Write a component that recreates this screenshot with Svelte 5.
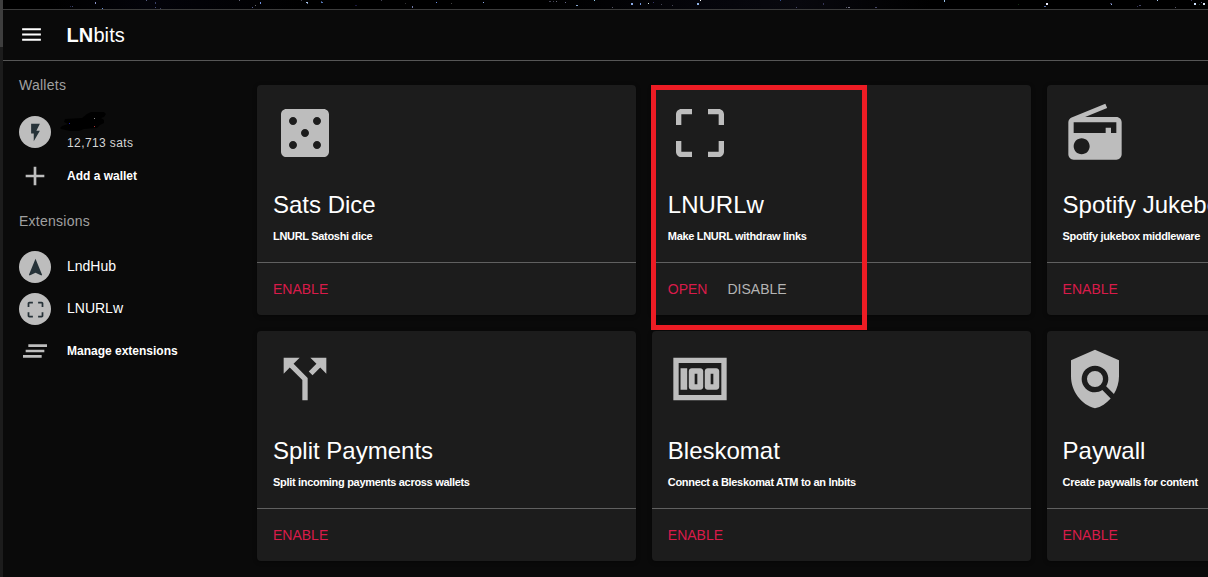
<script>
  const paths = {
    menu: 'M3 18h18v-2H3v2zm0-5h18v-2H3v2zm0-7v2h18V6H3z',
    dice: 'M19 3H5c-1.1 0-2 .9-2 2v14c0 1.1.9 2 2 2h14c1.1 0 2-.9 2-2V5c0-1.1-.9-2-2-2zM7.5 18c-.83 0-1.5-.67-1.5-1.5S6.67 15 7.5 15s1.5.67 1.5 1.5S8.33 18 7.5 18zm0-9C6.67 9 6 8.33 6 7.5S6.67 6 7.5 6 9 6.67 9 7.5 8.33 9 7.5 9zm4.5 4.5c-.83 0-1.5-.67-1.5-1.5s.67-1.5 1.5-1.5 1.5.67 1.5 1.5-.67 1.5-1.5 1.5zm4.5 4.5c-.83 0-1.5-.67-1.5-1.5s.67-1.5 1.5-1.5 1.5.67 1.5 1.5-.67 1.5-1.5 1.5zm0-9c-.83 0-1.5-.67-1.5-1.5S15.67 6 16.5 6s1.5.67 1.5 1.5S17.33 9 16.5 9z',
    crop: 'M3 5v4h2V5h4V3H5c-1.1 0-2 .9-2 2zm2 10H3v4c0 1.1.9 2 2 2h4v-2H5v-4zm14 4h-4v2h4c1.1 0 2-.9 2-2v-4h-2v4zm0-16h-4v2h4v4h2V5c0-1.1-.9-2-2-2z',
    radio: 'M3.24 6.15C2.51 6.43 2 7.17 2 8v12c0 1.1.89 2 2 2h16c1.11 0 2-.9 2-2V8c0-1.11-.89-2-2-2H8.3l8.26-3.34L15.88 1 3.24 6.15zM7 20c-1.66 0-3-1.34-3-3s1.34-3 3-3 3 1.34 3 3-1.34 3-3 3zm13-8h-2v-2h-2v2H4V8h16v4z',
    split: 'M14 4l2.29 2.29-2.88 2.88 1.42 1.42 2.88-2.88L20 10V4zm-4 0H4v6l2.29-2.29 4.71 4.7V20h2v-8.41l-5.29-5.3z',
    money: 'M4.7 8h2.5v8H4.7zM12.1 8H8.900c-.6 0-1.1.45-1.1 1v6c0 .55.5 1 1.100 1h3.200c.6 0 1.100-.45 1.100-1V9c0-.55-.5-1-1.100-1zm-1.100 6h-1v-4h1v4zm7.100-6h-3.200c-.6 0-1.100.45-1.100 1v6c0 .55.5 1 1.100 1h3.200c.6 0 1.100-.45 1.100-1V9c0-.55-.5-1-1.100-1zm-1.100 6h-1v-4h1v4zM2 4v16h20V4H2zm2 14V6h16v12H4z',
    policy: 'M21 5l-9-4-9 4v6c0 5.55 3.84 10.74 9 12 2.3-.56 4.33-1.9 5.88-3.71l-3.12-3.12c-1.94 1.29-4.58 1.07-6.29-.64-1.95-1.95-1.95-5.12 0-7.07 1.95-1.95 5.12-1.95 7.07 0 1.71 1.71 1.92 4.35.64 6.29l2.9 2.9C20.29 15.69 21 13.38 21 11V5zM12 9a3 3 0 1 0 0 6 3 3 0 0 0 0-6z',
    flash: 'M7 2v11h3v9l7-12h-4l4-8z',
    nav: 'M12 2L4.5 20.29l.71.71L12 18l6.79 3 .71-.71z',
    add: 'M19 13h-6v6h-2v-6H5v-2h6V5h2v6h6v2z',
    list: 'M5 13h14v-2H5v2zm-2 4h14v-2H3v2zM7 7v2h14V7H7z'
  };

  const cards = [
    { icon: 'dice', title: 'Sats Dice', text: 'LNURL Satoshi dice' },
    { icon: 'crop', title: 'LNURLw', text: 'Make LNURL withdraw links', on: true },
    { icon: 'radio', title: 'Spotify Jukebox', text: 'Spotify jukebox middleware' },
    { icon: 'split', title: 'Split Payments', text: 'Split incoming payments across wallets' },
    { icon: 'money', title: 'Bleskomat', text: 'Connect a Bleskomat ATM to an lnbits' },
    { icon: 'policy', title: 'Paywall', text: 'Create paywalls for content' }
  ];

  // x, y, width, height, fill
  const stars = [
    [95, 2, 1, 2, '#8890c8'], [102, 8, 1, 1, '#6a90d8'], [72, 6, 1, 1, '#3c4470'], [70, 6, 1, 1, '#262c50'],
    [146, 0, 1, 1, '#555a80'], [155, 2, 1, 2, '#3a4068'], [155, 7, 1, 1, '#454c78'], [160, 8, 1, 1, '#3a3f60'],
    [239, 0, 1, 1, '#667'], [252, 7, 1, 1, '#555d90'], [255, 5, 1, 1, '#666'], [260, 2, 1, 2, '#7090e0'],
    [301, 0, 1, 1, '#445'], [306, 2, 2, 1, '#a8c4e8'], [307, 3, 1, 1, '#7088b0'], [321, 2, 2, 1, '#5578b8'],
    [321, 1, 1, 1, '#38507c'], [355, 5, 2, 1, '#1a1840'], [381, 0, 1, 1, '#445'], [405, 3, 1, 1, '#333'],
    [412, 6, 1, 2, '#7078a8'], [436, 2, 1, 1, '#6a90e8'], [451, 3, 1, 1, '#444'], [483, 2, 1, 1, '#88a8e8'],
    [549, 1, 2, 1, '#445'], [553, 1, 1, 1, '#445'], [556, 1, 1, 1, '#667'], [565, 2, 1, 1, '#668'],
    [576, 5, 2, 1, '#88a8d0'], [594, 0, 1, 1, '#90c8e8'], [612, 7, 1, 1, '#556'], [631, 3, 2, 2, '#8aaae8'],
    [640, 3, 1, 2, '#7094d8'], [648, 3, 1, 1, '#d8eee8'], [653, 2, 1, 1, '#336'], [661, 4, 1, 1, '#445'],
    [672, 5, 1, 1, '#445'], [697, 3, 2, 2, '#90b4e8'], [700, 0, 1, 1, '#fff'], [780, 0, 1, 1, '#345090'],
    [796, 7, 1, 1, '#446'], [823, 3, 1, 2, '#335'], [846, 7, 1, 1, '#556'], [848, 7, 2, 1, '#778'],
    [875, 7, 2, 1, '#446'], [944, 0, 1, 2, '#98c0e8'], [1018, 4, 1, 1, '#143014'], [1046, 3, 2, 2, '#eef'],
    [1044, 6, 2, 1, '#5068a0'], [1110, 3, 2, 1, '#446'], [1111, 4, 1, 1, '#9ab8f0'], [1139, 5, 2, 1, '#446'],
    [1137, 6, 1, 1, '#335'], [1157, 0, 1, 1, '#aac8ee'], [1175, 7, 1, 1, '#556'], [1191, 0, 1, 1, '#446'],
    [1194, 3, 2, 2, '#cfe4ff'], [1199, 4, 1, 1, '#244'], [1201, 2, 1, 1, '#668'], [1203, 3, 2, 2, '#dde8f8']
  ];
</script>

{#snippet icon(name, size)}
  <svg class="icon" width={size} height={size} viewBox="0 0 24 24" fill="currentColor"><path d={paths[name]} /></svg>
{/snippet}

<div class="page">
  <div class="edge"><div class="thumb"></div></div>
  <div class="main">
    <svg class="sky" width="1205" height="9" viewBox="3 0 1205 9" shape-rendering="crispEdges">
      {#each stars as [x, y, w, h, fill]}
        <rect {x} {y} width={w} height={h} {fill} />
      {/each}
    </svg>
    <header>
      {@render icon('menu', 25)}
      <div class="brand"><strong>LN</strong>bits</div>
    </header>
    <div class="body">
      <aside>
        <div class="label">Wallets</div>
        <div class="item wallet">
          <div class="avatar">{@render icon('flash', 21)}</div>
          <div class="balance">
            <svg class="scribble" width="48" height="21" viewBox="0 0 48 21">
              <path fill="#000" d="M0 17L2 15L8 13L4 11L5 8L22 7L27 3L31 1L44 1L46 3L44 6L41 7L44 9L44 12L40 14L37 17L24 18L19 20L10 20L1 18Z" />
              <path fill="#888" d="M34 7h1v1h-1z" />
              <path fill="#a33" d="M34 15h1v1h-1z" />
              <path fill="#22a" d="M9 12h1v1h-1z" />
            </svg>
            <span>12,713 sats</span>
          </div>
        </div>
        <div class="item add">
          <div class="side">{@render icon('add', 32)}</div>
          <span class="caption">Add a wallet</span>
        </div>
        <div class="label second">Extensions</div>
        <div class="item ext">
          <div class="avatar">{@render icon('nav', 21)}</div>
          <span class="name">LndHub</span>
        </div>
        <div class="item ext">
          <div class="avatar">{@render icon('crop', 21)}</div>
          <span class="name">LNURLw</span>
        </div>
        <div class="item ext">
          <div class="side">{@render icon('list', 32)}</div>
          <span class="caption">Manage extensions</span>
        </div>
      </aside>
      <main>
        {#each cards as card}
          <section class="card">
            <div class="info">
              {@render icon(card.icon, 64)}
              <h5>{card.title}</h5>
              <small>{card.text}</small>
            </div>
            <div class="actions">
              {#if card.on}
                <span class="red">OPEN</span><span class="grey">DISABLE</span>
                <div class="highlight"></div>
              {:else}
                <span class="red">ENABLE</span>
              {/if}
            </div>
          </section>
        {/each}
      </main>
    </div>
  </div>
</div>

<style>
  :global(body) { background: #0a0a0a; overflow: hidden; }
  .page { display: flex; width: 1208px; height: 577px; overflow: hidden; background: #0a0a0a; color: #fff; font: 14px/20px "Liberation Sans", Arial, sans-serif; }
  .page * { box-sizing: border-box; }
  .icon { display: block; flex: none; }
  .edge { width: 3px; flex: none; background: #1c1c1c; }
  .thumb { height: 47px; background: #3e3e3e; }
  .main { flex: none; width: 1205px; }
  .sky { display: block; background: linear-gradient(90deg, #000 0 4%, #03030a 12%, #000 25% 45%, #05050b 58%, #08080e 66%, #000 77%); }
  header { height: 52px; border-top: 1px solid #3c3c3c; border-bottom: 1px solid #565656; display: flex; align-items: center; padding: 0 0 1px 16px; }
  .brand { font-size: 20px; margin-left: 22.5px; line-height: 24px; letter-spacing: .1px; }
  .body { display: flex; }
  aside { width: 254px; flex: none; padding: 14px 0 0 16px; }
  .label { height: 20px; color: #a0a0a0; letter-spacing: .25px; }
  .second { margin-top: 14px; }
  .item { display: flex; align-items: center; gap: 16px; }
  .avatar, .side { width: 32px; height: 32px; flex: none; display: flex; align-items: center; justify-content: center; color: #bdbdbd; }
  .avatar { border-radius: 50%; background: #bdbdbd; color: #263238; }
  .wallet { height: 42px; margin-top: 16px; }
  .balance { position: relative; padding-top: 22px; height: 42px; color: #d6d6d6; font-size: 12px; letter-spacing: .4px; }
  .scribble { position: absolute; left: -7px; top: 0; }
  .caption { font-size: 12px; font-weight: bold; }
  .add { height: 42px; margin-top: 2px; }
  .second + .ext { margin-top: 15px; }
  .ext { height: 42px; }
  .name { padding-bottom: 2px; }
  .ext .caption { padding-bottom: 1px; }
  main { flex: none; display: grid; grid-template-columns: repeat(3, 378.8px); grid-auto-rows: 230px; gap: 16px; padding-top: 24px; }
  .card { background: #1c1c1c; border-radius: 4px; box-shadow: 0 1px 4px #0006; }
  .info { height: 178px; padding: 16px; border-bottom: 1px solid #606060; color: #bdbdbd; }
  h5 { margin: 24px 0 0; font-size: 24px; line-height: 32px; font-weight: 400; color: #fff; white-space: nowrap; }
  small { display: block; margin-top: 5px; font-size: 11px; line-height: 20px; font-weight: bold; letter-spacing: -.31px; color: #fff; white-space: nowrap; }
  .actions { position: relative; height: 52px; display: flex; align-items: center; gap: 20px; padding: 0 16px; }
  .red { color: #d81b4a; }
  .grey { color: #b4b4b4; }
  .highlight { position: absolute; left: -.8px; top: -178px; width: 216px; height: 245px; border: 5px solid #ed1c24; z-index: 2; }
</style>
